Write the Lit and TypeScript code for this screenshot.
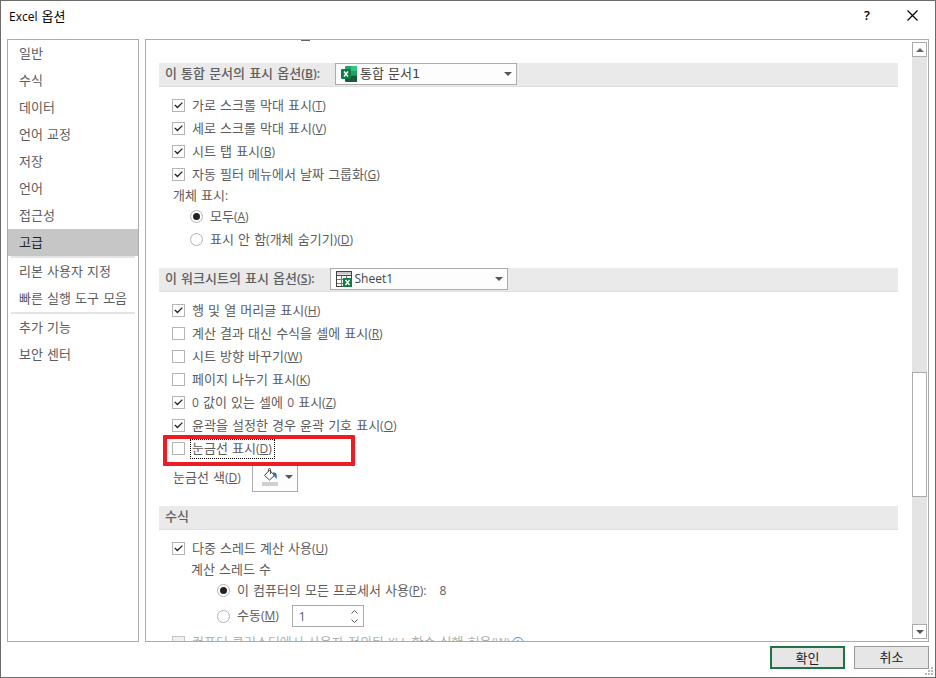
import { LitElement, html, css, svg, nothing, TemplateResult } from "lit";
import { customElement, property } from "lit/decorators.js";
import { classMap } from "lit/directives/class-map.js";

/* Sets Latin runs in the Latin face; "&X" marks an underlined access key. */
function caption(text: string): TemplateResult {
  const runs = text.split(/([^\s가-힣]+)/);
  return html`${runs.map((run, i) => {
    if (i % 2 === 0) return run;
    const at = run.indexOf("&");
    return at < 0
      ? html`<span class="latin">${run}</span>`
      : html`<span class="latin">${run.slice(0, at)}<u>${run[at + 1]}</u>${run.slice(at + 2)}</span>`;
  })}`;
}

const base = css`
  :host,
  *,
  *::before,
  *::after {
    box-sizing: border-box;
  }
  :host,
  button,
  select,
  input {
    font-family: "DejaVu Sans", "Noto Sans CJK KR", sans-serif;
    font-size: 13px;
    color: #5c5c5c;
  }
  .latin {
    font-family: "Open Sans", "Noto Sans", sans-serif;
    font-size: 12px;
  }
  button {
    padding: 0;
    margin: 0;
    border: 0;
    background: none;
  }
  svg {
    display: block;
  }
`;

const downArrow = svg`<path d="M0 0h8L4 4z" fill="#555" />`;

@customElement("option-item")
class OptionItem extends LitElement {
  @property() kind = "checkbox";
  @property() text = "";
  @property() group = "";
  @property({ type: Boolean }) on = false;
  @property({ type: Boolean }) off = false;
  @property({ type: Boolean }) focused = false;

  static styles = [
    base,
    css`
      :host {
        display: block;
      }
      label {
        display: flex;
        align-items: center;
        height: 23px;
        white-space: pre;
      }
      input {
        appearance: none;
        flex: none;
        display: grid;
        place-items: center;
        width: 13px;
        height: 13px;
        margin: 0 5px 0 0;
        border: 1px solid #b4b4b4;
        background: #fff;
      }
      .radio {
        border-radius: 50%;
      }
      .radio:checked::before {
        content: "";
        width: 7px;
        height: 7px;
        border-radius: 50%;
        background: #222;
      }
      .checkbox:checked::before {
        content: "";
        width: 9px;
        height: 7px;
        background: #222;
        clip-path: polygon(3% 48%, 14% 36%, 38% 64%, 88% 2%, 98% 16%, 38% 94%);
      }
      .text {
        height: 20px;
        line-height: 17px;
        padding: 0 1px;
        border: 1px solid transparent;
      }
      .focused {
        padding-right: 2px;
        border: 1px dotted #000;
      }
      .off {
        color: #b0b0b0;
      }
      input:disabled {
        background: #f0f0f0;
        border-color: #c4c4c4;
      }
    `,
  ];

  render() {
    return html`<label>
      <input
        class=${this.kind}
        type=${this.kind}
        name=${this.group || nothing}
        .checked=${this.on}
        ?disabled=${this.off}
      /><span class=${classMap({ text: true, focused: this.focused, off: this.off })}>${caption(this.text)}</span>
    </label>`;
  }
}

const workbookIcon = svg`
  <path d="M5 1h10.500v14H5z" fill="#21a366" />
  <path d="M10 0h5.500a.5.5 0 0 1 .5.5V5h-6z" fill="#33c481" />
  <path d="M4 1a1 1 0 0 1 1-1h5v5H4z" fill="#21a366" />
  <path d="M4 5h6v5H4z" fill="#107c41" />
  <path d="M10 5h6v5h-6z" fill="#21a366" />
  <path d="M4 10h12v5.500a.5.5 0 0 1-.5.5H5a1 1 0 0 1-1-1z" fill="#185c37" />
  <path d="M10 10h6v-.5h-6z" fill="#107c41" />
  <rect x="0" y="3" width="10" height="10" rx="1" fill="#107c41" />
  <path d="M3 5.500l4 5M7 5.500l-4 5" stroke="#fff" stroke-width="1.500" />`;

const sheetIcon = svg`
  <rect x=".5" y=".5" width="15" height="15" fill="#fff" stroke="#444" />
  <rect x="1" y="1" width="14" height="2.500" fill="#c8c8c8" />
  <path d="M1 4.500h14" stroke="#444" />
  <path d="M1 8.500h14M1 12.500h8M5.500 5v10M10.500 5v3" stroke="#777" fill="none" />
  <rect x="7" y="7" width="9" height="9" fill="#107c41" />
  <path d="M9.500 9l4 5M13.500 9l-4 5" stroke="#fff" stroke-width="1.400" />`;

@customElement("app-root")
class AppRoot extends LitElement {
  static styles = [
    base,
    css`
      :host {
        display: flex;
        flex-direction: column;
        height: 100vh;
        padding: 0 6px 8px;
        background: #fff;
        border: 1px solid #6b6b6b;
        position: relative;
      }
      .titlebar {
        display: flex;
        align-items: center;
        height: 38px;
        flex: none;
        padding: 0 11px 10px 2px;
        color: #000;
      }
      .titlebar h1 {
        flex: 1;
        margin: 0;
        font-size: 13px;
        font-weight: 400;
      }
      .help {
        width: 12px;
        margin-right: 34px;
        color: #000;
        font-family: "Open Sans", sans-serif;
        font-weight: 600;
      }
      .panes {
        display: flex;
        gap: 6px;
        flex: 1;
        min-height: 0;
      }
      nav,
      .page {
        border: 1px solid #ababab;
      }
      nav {
        width: 132px;
        flex: none;
      }
      nav button {
        display: block;
        width: 100%;
        height: 27px;
        padding: 0 0 2px 11px;
        text-align: left;
        white-space: nowrap;
      }
      nav .current {
        background: #c6c6c6;
        color: #222;
      }
      nav hr {
        height: 2px;
        margin: 0 3px;
        border: 0;
        background: #e4e4e4;
      }
      .page {
        flex: 1;
        min-width: 0;
        display: flex;
        overflow: hidden;
      }
      .content {
        flex: 1;
        min-width: 0;
        overflow: hidden;
        padding: 0 14px 0 13px;
      }
      .above {
        height: 23px;
        padding-left: 142px;
      }
      .above i {
        display: block;
        width: 9px;
        height: 1px;
        background: #666;
      }
      .heading {
        display: flex;
        align-items: flex-start;
        gap: 15px;
        height: 24px;
        padding-left: 6px;
        background: #eaeaea;
        border-bottom: 1px solid #dfdfdf;
        font-weight: 500;
        line-height: 21px;
        color: #606060;
        white-space: pre;
      }
      .heading .latin {
        font-weight: 600;
      }
      .heading h2 {
        margin: 0;
        font: inherit;
      }
      .body {
        padding: 7px 0 14px 13px;
      }
      .sub {
        height: 19px;
        line-height: 20px;
        padding-left: 1px;
        white-space: pre;
      }
      .deep {
        padding-left: 19px;
      }
      .radios {
        padding: 0 0 3px 18px;
      }
      .picker {
        display: block;
        position: relative;
        width: 182px;
        height: 22px;
        white-space: normal;
      }
      .narrow {
        width: 178px;
      }
      .picker select {
        display: block;
        appearance: none;
        width: 100%;
        height: 100%;
        padding: 0 20px 2px 24px;
        border: 1px solid #ababab;
        border-radius: 0;
        background: #fdfdfd;
        color: #444;
      }
      .picker select.latin {
        font-family: "Open Sans", "Noto Sans", sans-serif;
        font-size: 12px;
        font-weight: 400;
      }
      .picker svg {
        position: absolute;
        pointer-events: none;
      }
      .picker .icon {
        left: 6px;
        top: 3px;
      }
      .picker .arrow {
        right: 5px;
        top: 9px;
      }
      .marked {
        position: relative;
      }
      .marked::after {
        content: "";
        position: absolute;
        left: -9px;
        top: -2px;
        width: 192px;
        height: 31px;
        border: 4px solid #ed1c24;
        border-radius: 1px;
        pointer-events: none;
        z-index: 1;
      }
      .colour {
        display: flex;
        align-items: center;
        gap: 11px;
        padding: 4px 0 0 1px;
        white-space: pre;
      }
      .colour label {
        padding-bottom: 4px;
      }
      .swatch {
        display: flex;
        align-items: center;
        gap: 6px;
        width: 46px;
        height: 28px;
        padding: 0 0 2px 9px;
        border: 1px solid #ababab;
        background: #fdfdfd;
      }
      .threads {
        padding-left: 45px;
      }
      .line {
        display: flex;
        align-items: center;
        gap: 11px;
      }
      .manual {
        height: 29px;
        padding-bottom: 1px;
      }
      .tight {
        gap: 0;
      }
      .spinner {
        display: flex;
        width: 72px;
        height: 22px;
        border: 1px solid #ababab;
      }
      .spinner input {
        appearance: textfield;
        flex: 1;
        min-width: 0;
        padding: 0 0 0 6px;
        border: 0;
        outline: 0;
        font-family: "Open Sans", sans-serif;
        font-size: 12px;
      }
      .spinner input::-webkit-inner-spin-button {
        display: none;
      }
      .steps {
        display: flex;
        flex-direction: column;
        justify-content: center;
        gap: 5px;
        padding-right: 5px;
      }
      .scroll {
        display: flex;
        flex-direction: column;
        width: 15px;
        margin: 2px 1px 2px 0;
        background: #e4e4e4;
      }
      .scroll button {
        display: grid;
        place-items: center;
        height: 15px;
        flex: none;
        border: 1px solid #ababab;
        background: #fff;
      }
      .before {
        flex: 317;
      }
      .scroll .thumb {
        flex: 123;
      }
      .after {
        flex: 128;
      }
      footer {
        display: flex;
        justify-content: flex-end;
        gap: 9px;
        padding-top: 4px;
      }
      footer button {
        width: 75px;
        height: 23px;
        padding-bottom: 2px;
        border: 1px solid #999;
        background: #e6e6e6;
        color: #222;
      }
      footer .default {
        border: 2px solid #217346;
      }
      .grip {
        position: absolute;
        right: 2px;
        bottom: 2px;
      }
    `,
  ];

  private nav(items: string[]) {
    return items.map(
      (t) => html`<button class=${classMap({ current: t === "고급" })}>${t}</button>`,
    );
  }

  private picker(id: string, value: string, icon: unknown, narrow = false) {
    return html`<span class=${classMap({ picker: true, narrow })}>
      <select id=${id} class=${classMap({ latin: narrow })}>
        <option>${value}</option>
      </select>
      <svg class="icon" width="16" height="16">${icon}</svg>
      <svg class="arrow" width="8" height="4">${downArrow}</svg>
    </span>`;
  }

  render() {
    return html`
      <header class="titlebar">
        <h1>${caption("Excel 옵션")}</h1>
        <button class="help">?</button>
        <button aria-label="닫기">
          <svg width="11" height="11"><path d="M.5.5l10 10M10.500.5l-10 10" stroke="#000" stroke-width="1.200" /></svg>
        </button>
      </header>
      <div class="panes">
        <nav>
          ${this.nav(["일반", "수식", "데이터", "언어 교정", "저장", "언어", "접근성", "고급"])}
          <hr />
          ${this.nav(["리본 사용자 지정", "빠른 실행 도구 모음"])}
          <hr />
          ${this.nav(["추가 기능", "보안 센터"])}
        </nav>
        <main class="page">
          <div class="content">
            <div class="above"><i></i></div>
            <div class="heading">
              <label for="book">${caption("이 통합 문서의 표시 옵션(&B):")}</label>
              ${this.picker("book", "통합 문서1", workbookIcon)}
            </div>
            <div class="body">
              <option-item on text="가로 스크롤 막대 표시(&T)"></option-item>
              <option-item on text="세로 스크롤 막대 표시(&V)"></option-item>
              <option-item on text="시트 탭 표시(&B)"></option-item>
              <option-item on text="자동 필터 메뉴에서 날짜 그룹화(&G)"></option-item>
              <div class="sub">${caption("개체 표시:")}</div>
              <div class="radios">
                <option-item kind="radio" group="objects" on text="모두(&A)"></option-item>
                <option-item kind="radio" group="objects" text="표시 안 함(개체 숨기기)(&D)"></option-item>
              </div>
            </div>
            <div class="heading">
              <label for="sheet">${caption("이 워크시트의 표시 옵션(&S):")}</label>
              ${this.picker("sheet", "Sheet1", sheetIcon, true)}
            </div>
            <div class="body">
              <option-item on text="행 및 열 머리글 표시(&H)"></option-item>
              <option-item text="계산 결과 대신 수식을 셀에 표시(&R)"></option-item>
              <option-item text="시트 방향 바꾸기(&W)"></option-item>
              <option-item text="페이지 나누기 표시(&K)"></option-item>
              <option-item on text="0 값이 있는 셀에 0 표시(&Z)"></option-item>
              <option-item on text="윤곽을 설정한 경우 윤곽 기호 표시(&O)"></option-item>
              <option-item class="marked" focused text="눈금선 표시(&D)"></option-item>
              <div class="colour">
                <label for="colour">${caption("눈금선 색(&D)")}</label>
                <button id="colour" class="swatch">
                  <svg width="17" height="18" fill="none">
                    <path d="M7.500 2l5 5.500-5 4.500-5-4.500z" stroke="#444" fill="#fff" />
                    <path d="M8.500 6V1.500a1 1 0 0 0-2 0v2" stroke="#444" />
                    <path d="M11 4.500c3.500-.5 4.500 2 3.500 6.500-1.500-1-1.500-3-3.500-3.500z" fill="#2e75a8" />
                    <path d="M0 14h16v4H0z" fill="#d0d0d0" />
                  </svg>
                  <svg width="8" height="4">${downArrow}</svg>
                </button>
              </div>
            </div>
            <div class="heading"><h2>수식</h2></div>
            <div class="body">
              <option-item on text="다중 스레드 계산 사용(&U)"></option-item>
              <div class="sub deep">계산 스레드 수</div>
              <div class="threads">
                <div class="line">
                  <option-item kind="radio" group="threads" on text="이 컴퓨터의 모든 프로세서 사용(&P):"></option-item>
                  <span class="latin">8</span>
                </div>
                <div class="line manual">
                  <option-item kind="radio" group="threads" text="수동(&M)"></option-item>
                  <span class="spinner">
                    <input type="number" value="1" aria-label="스레드 수" />
                    <span class="steps">
                      <button aria-label="증가"><svg width="7" height="4"><path d="M.5 3.500l3-3 3 3" fill="none" stroke="#555" /></svg></button>
                      <button aria-label="감소"><svg width="7" height="4"><path d="M.5.5l3 3 3-3" fill="none" stroke="#555" /></svg></button>
                    </span>
                  </span>
                </div>
              </div>
              <div class="line tight">
                <option-item off text="컴퓨터 클러스터에서 사용자 정의된 XLL 함수 실행 허용(&W)"></option-item>
                <svg width="12" height="12" fill="none" stroke="#5b87c5"><circle cx="6" cy="6" r="5.500" /><path d="M6 3v1M6 5v4" /></svg>
              </div>
            </div>
          </div>
          <div class="scroll">
            <button aria-label="위로"><svg width="8" height="4"><path d="M0 4h8L4 0z" fill="#666" /></svg></button>
            <span class="before"></span>
            <button class="thumb" aria-label="스크롤"></button>
            <span class="after"></span>
            <button aria-label="아래로"><svg width="8" height="4">${downArrow}</svg></button>
          </div>
        </main>
      </div>
      <footer>
        <button class="default">확인</button>
        <button>취소</button>
      </footer>
      <svg class="grip" width="8" height="8" fill="#b8b8b8">
        <path d="M6 0h2v2H6zM3 3h2v2H3zM6 3h2v2H6zM0 6h2v2H0zM3 6h2v2H3zM6 6h2v2H6z" />
      </svg>
    `;
  }
}
